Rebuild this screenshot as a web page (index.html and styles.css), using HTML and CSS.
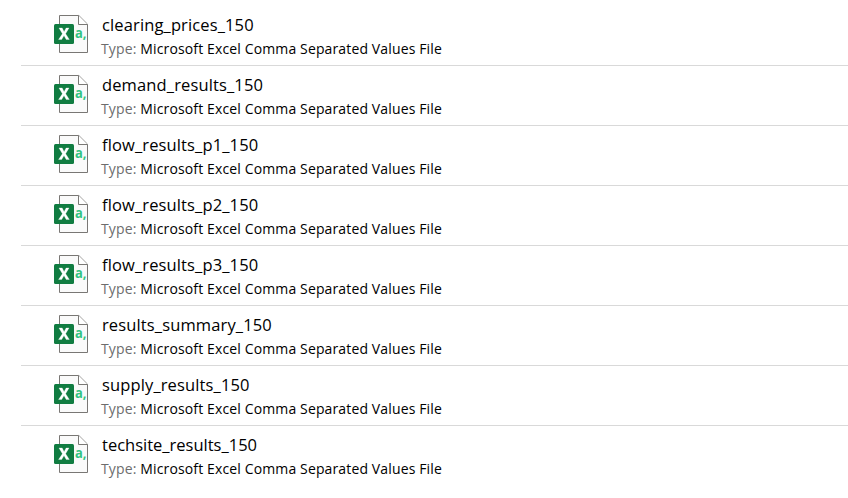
FILE: index.html
```html
<!DOCTYPE html>
<html lang="en">
<head>
<meta charset="utf-8">
<title>Files</title>
<link rel="stylesheet" href="styles.css">
</head>
<body>
<svg width="0" height="0" class="defs">
  <symbol id="csv" viewBox="0 0 36 40">
    <path d="M5.5 1.5H24.8L33.5 10.2V38.5H5.5Z" fill="#fafafa" stroke="#797774"/>
    <path d="M24.5 1.5V10.5H33.5" fill="#fff" stroke="#797774"/>
    <rect y="10" width="20" height="20" rx="1.5" fill="#107c41"/>
    <path d="M4.6 25.5 8.4 19.7 5 14H8.2L10.1 17.8 12.1 14H15L11.6 19.7 15.3 25.5H12.2L10 21.6 7.7 25.5Z" fill="#fff" stroke="#fff" stroke-width=".3"/>
  </symbol>
</svg>
<ul class="files">
  <li class="file"><svg class="icon"><use href="#csv"/><text class="glyph" x="21" y="24" textLength="11.5" lengthAdjust="spacingAndGlyphs">a,</text></svg><div class="info"><div class="name">clearing_prices_150</div><div class="type"><span class="label">Type:</span> Microsoft Excel Comma Separated Values File</div></div></li>
  <li class="file"><svg class="icon"><use href="#csv"/><text class="glyph" x="21" y="24" textLength="11.5" lengthAdjust="spacingAndGlyphs">a,</text></svg><div class="info"><div class="name">demand_results_150</div><div class="type"><span class="label">Type:</span> Microsoft Excel Comma Separated Values File</div></div></li>
  <li class="file"><svg class="icon"><use href="#csv"/><text class="glyph" x="21" y="24" textLength="11.5" lengthAdjust="spacingAndGlyphs">a,</text></svg><div class="info"><div class="name">flow_results_p1_150</div><div class="type"><span class="label">Type:</span> Microsoft Excel Comma Separated Values File</div></div></li>
  <li class="file"><svg class="icon"><use href="#csv"/><text class="glyph" x="21" y="24" textLength="11.5" lengthAdjust="spacingAndGlyphs">a,</text></svg><div class="info"><div class="name">flow_results_p2_150</div><div class="type"><span class="label">Type:</span> Microsoft Excel Comma Separated Values File</div></div></li>
  <li class="file"><svg class="icon"><use href="#csv"/><text class="glyph" x="21" y="24" textLength="11.5" lengthAdjust="spacingAndGlyphs">a,</text></svg><div class="info"><div class="name">flow_results_p3_150</div><div class="type"><span class="label">Type:</span> Microsoft Excel Comma Separated Values File</div></div></li>
  <li class="file"><svg class="icon"><use href="#csv"/><text class="glyph" x="21" y="24" textLength="11.5" lengthAdjust="spacingAndGlyphs">a,</text></svg><div class="info"><div class="name">results_summary_150</div><div class="type"><span class="label">Type:</span> Microsoft Excel Comma Separated Values File</div></div></li>
  <li class="file"><svg class="icon"><use href="#csv"/><text class="glyph" x="21" y="24" textLength="11.5" lengthAdjust="spacingAndGlyphs">a,</text></svg><div class="info"><div class="name">supply_results_150</div><div class="type"><span class="label">Type:</span> Microsoft Excel Comma Separated Values File</div></div></li>
  <li class="file"><svg class="icon"><use href="#csv"/><text class="glyph" x="21" y="24" textLength="11.5" lengthAdjust="spacingAndGlyphs">a,</text></svg><div class="info"><div class="name name-tight">techsite_results_150</div><div class="type"><span class="label">Type:</span> Microsoft Excel Comma Separated Values File</div></div></li>
</ul>
</body>
</html>
```
FILE: styles.css
```css
body {
  margin: 0;
  background: #fff;
  color: #000;
  font-family: "Open Sans", "Noto Sans", sans-serif;
  overflow: hidden;
}

.defs {
  display: block;
}

.files {
  list-style: none;
  margin: 0 0 0 21px;
  padding: 6px 0 0;
}

.file {
  display: flex;
  box-sizing: border-box;
  height: 60px;
  padding-left: 33px;
  border-bottom: 1px solid #d9d9d9;
}

.file:last-child {
  border-bottom: 0;
}

.icon {
  width: 36px;
  height: 40px;
  margin-top: 8px;
}

.glyph {
  font: 700 15px "Open Sans", sans-serif;
  fill: #33c481;
}

.info {
  margin-left: 12px;
  padding-top: 6px;
  white-space: nowrap;
}

.name {
  font-size: 16.5px;
  line-height: 25px;
  letter-spacing: 0.13px;
}

.name-tight {
  letter-spacing: 0;
}

.type {
  margin-left: -1px;
  font-size: 14px;
  line-height: 23px;
  letter-spacing: 0.135px;
}

.label {
  color: #6d6d6d;
}
```
